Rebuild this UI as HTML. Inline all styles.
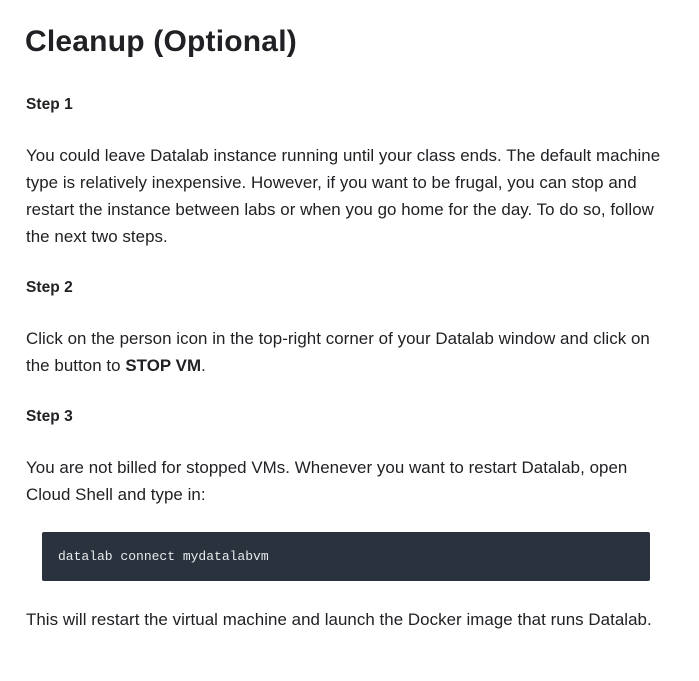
<!DOCTYPE html>
<html><head><meta charset="utf-8"><style>
body{margin:0;width:699px;height:681px;background:#fff;font-family:"Liberation Sans",sans-serif;color:#202124;position:relative;overflow:hidden}
.a{position:absolute;left:26px;width:680px;font-size:16.9px;line-height:27px;margin:0;white-space:nowrap;letter-spacing:0.05px}
h1{position:absolute;left:25px;top:22px;margin:0;font-size:30px;font-weight:bold;line-height:40px;letter-spacing:0.2px}
.s{font-weight:bold;font-size:15.5px}
.code{position:absolute;left:42px;top:532px;width:608px;height:49px;background:#29323d;border-radius:2px}
.code span{position:absolute;left:16px;top:17px;color:#e8eaed;font-family:"Liberation Mono",monospace;font-size:13px;line-height:16px}
</style></head><body>
<h1>Cleanup (Optional)</h1>
<p class="a s" style="top:91px">Step 1</p>
<p class="a" style="top:142px">You could leave Datalab instance running until your class ends. The default machine<br>type is relatively inexpensive. However, if you want to be frugal, you can stop and<br>restart the instance between labs or when you go home for the day. To do so, follow<br>the next two steps.</p>
<p class="a s" style="top:274px">Step 2</p>
<p class="a" style="top:325px">Click on the person icon in the top-right corner of your Datalab window and click on<br>the button to <b>STOP VM</b>.</p>
<p class="a s" style="top:403px">Step 3</p>
<p class="a" style="top:454px">You are not billed for stopped VMs. Whenever you want to restart Datalab, open<br>Cloud Shell and type in:</p>
<div class="code"><span>datalab connect mydatalabvm</span></div>
<p class="a" style="top:606px">This will restart the virtual machine and launch the Docker image that runs Datalab.</p>
</body></html>
